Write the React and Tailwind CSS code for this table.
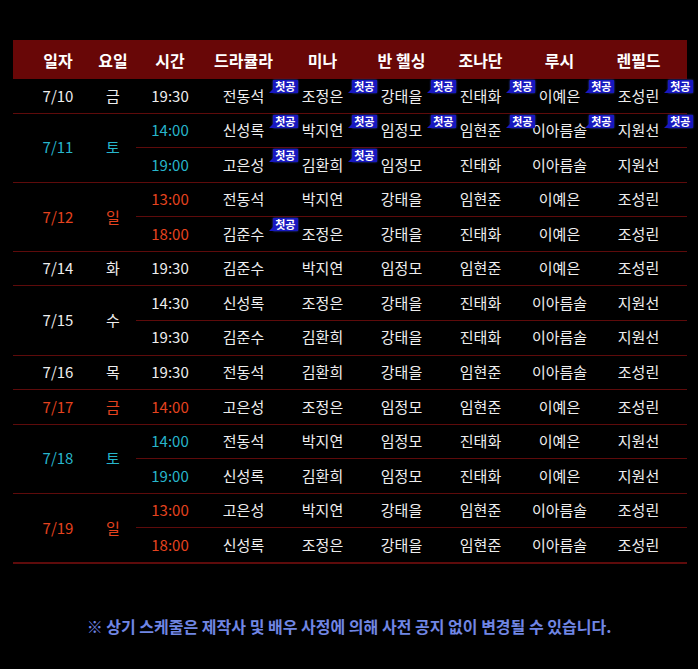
import React from "react";

const W = "text-[#eeeeee]";
const C = "text-[#27b6cc]";
const R = "text-[#e5431f]";

const groups = [
  { date: "7/10", day: "금", c: W, rows: [{ t: "19:30", n: ["전동석", "조정은", "강태을", "진태화", "이예은", "조성린"], b: [0, 1, 2, 3, 4, 5] }] },
  {
    date: "7/11", day: "토", c: C, rows: [
      { t: "14:00", n: ["신성록", "박지연", "임정모", "임현준", "이아름솔", "지원선"], b: [0, 1, 2, 3, 4, 5] },
      { t: "19:00", n: ["고은성", "김환희", "임정모", "진태화", "이아름솔", "지원선"], b: [0, 1] },
    ]
  },
  {
    date: "7/12", day: "일", c: R, rows: [
      { t: "13:00", n: ["전동석", "박지연", "강태을", "임현준", "이예은", "조성린"], b: [] },
      { t: "18:00", n: ["김준수", "조정은", "강태을", "진태화", "이예은", "조성린"], b: [0] },
    ]
  },
  { date: "7/14", day: "화", c: W, rows: [{ t: "19:30", n: ["김준수", "박지연", "임정모", "임현준", "이예은", "조성린"], b: [] }] },
  {
    date: "7/15", day: "수", c: W, rows: [
      { t: "14:30", n: ["신성록", "조정은", "강태을", "진태화", "이아름솔", "지원선"], b: [] },
      { t: "19:30", n: ["김준수", "김환희", "강태을", "진태화", "이아름솔", "지원선"], b: [] },
    ]
  },
  { date: "7/16", day: "목", c: W, rows: [{ t: "19:30", n: ["전동석", "김환희", "강태을", "임현준", "이아름솔", "조성린"], b: [] }] },
  { date: "7/17", day: "금", c: R, rows: [{ t: "14:00", n: ["고은성", "조정은", "임정모", "임현준", "이예은", "조성린"], b: [] }] },
  {
    date: "7/18", day: "토", c: C, rows: [
      { t: "14:00", n: ["전동석", "박지연", "임정모", "진태화", "이예은", "지원선"], b: [] },
      { t: "19:00", n: ["신성록", "김환희", "임정모", "진태화", "이예은", "지원선"], b: [] },
    ]
  },
  {
    date: "7/19", day: "일", c: R, rows: [
      { t: "13:00", n: ["고은성", "박지연", "강태을", "임현준", "이아름솔", "조성린"], b: [] },
      { t: "18:00", n: ["신성록", "조정은", "강태을", "임현준", "이아름솔", "조성린"], b: [] },
    ]
  },
];

const headers = ["드라큘라", "미나", "반 헬싱", "조나단", "루시", "렌필드"];

function Badge() {
  return (
    <span className="absolute right-[-15px] top-[1px] z-10">
      <span className="absolute left-[-4px] bottom-0 w-0 h-0 border-t-[5px] border-t-transparent border-r-[5px] border-r-[#1818c0]" />
      <span className="block bg-[#1818c0] text-white text-[11px] font-bold leading-[13px] px-[2.5px] rounded-[1px] shadow-[0_0_2px_#3b56ff]">첫공</span>
    </span>
  );
}

export default function App() {
  return (
    <div className="w-[698px] min-h-[669px] bg-black pt-[40px] font-['Noto_Sans_CJK_KR','Noto_Sans',sans-serif]">
      <div className="mx-[13px] w-[674px]">
        <div className="h-[39px] bg-[#680707] flex pl-[17px] text-white font-bold text-[16px]">
          <div className="w-[56px] flex items-center justify-center">일자</div>
          <div className="w-[50px] pl-[4px] flex items-center justify-center">요일</div>
          <div className="w-[68px] flex items-center justify-center">시간</div>
          {headers.map((h) => (
            <div key={h} className="w-[79px] flex items-center justify-center">{h}</div>
          ))}
        </div>
        {groups.map((g, gi) => (
          <div
            key={g.date}
            className={`flex pl-[17px] ${gi === groups.length - 1 ? "border-b-2" : "border-b"} border-[#5e0b0b] text-[15px] ${g.c}`}
          >
            <div className="w-[56px] flex items-center justify-center">{g.date}</div>
            <div className="w-[50px] pl-[4px] flex items-center justify-center">{g.day}</div>
            <div className="flex-1 flex flex-col">
              {g.rows.map((r, ri) => {
                const last = ri === g.rows.length - 1;
                return (
                  <div
                    key={r.t}
                    className={`flex ${last ? "h-[33.57px]" : "h-[34.57px] border-b border-[#5e0b0b]"}`}
                  >
                    <div className="w-[68px] flex items-center justify-center">{r.t}</div>
                    {r.n.map((name, ni) => (
                      <div key={ni} className="relative w-[79px] flex items-center justify-center text-[#eeeeee]">
                        {name}
                        {r.b.includes(ni) && <Badge />}
                      </div>
                    ))}
                  </div>
                );
              })}
            </div>
          </div>
        ))}
      </div>
      <p className="mt-[51px] text-center text-[16px] font-bold text-[#7086e4] leading-[22px]">
        ※ 상기 스케줄은 제작사 및 배우 사정에 의해 사전 공지 없이 변경될 수 있습니다.
      </p>
    </div>
  );
}
